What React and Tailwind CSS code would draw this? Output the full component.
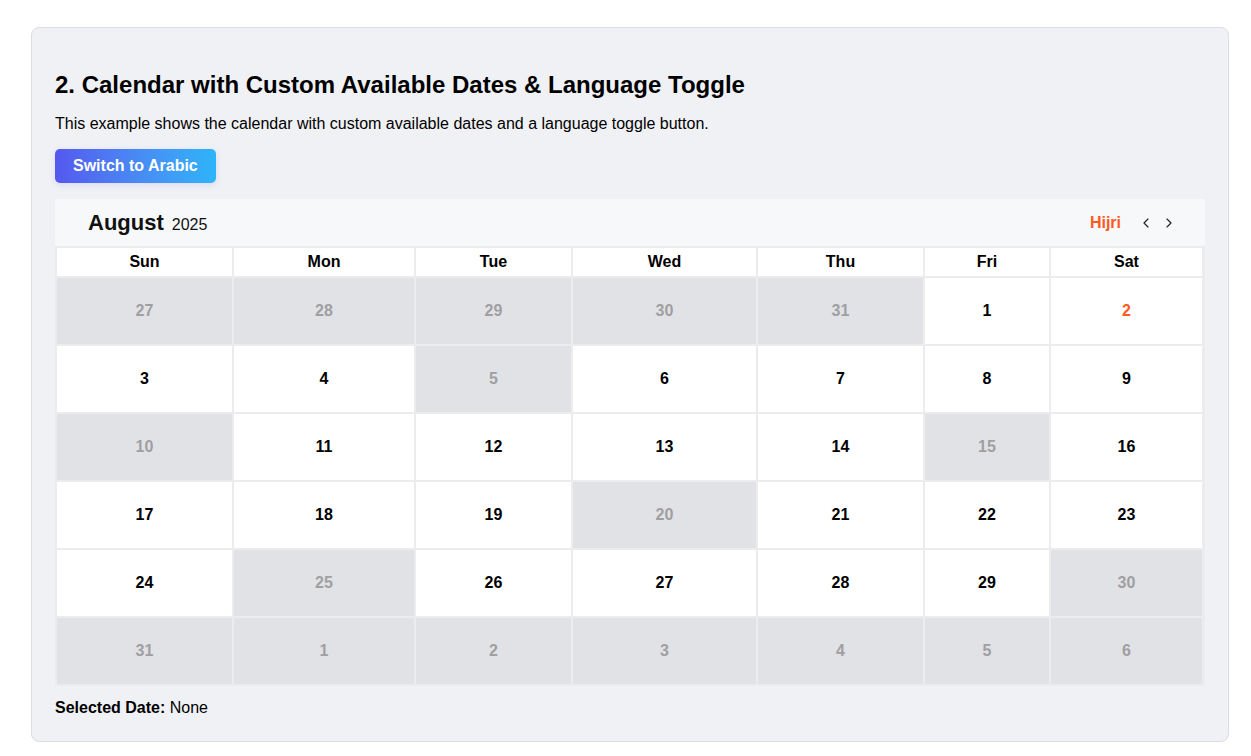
import { ChevronLeft, ChevronRight } from 'lucide-react';

const DAYS = ['Sun', 'Mon', 'Tue', 'Wed', 'Thu', 'Fri', 'Sat'];

// [day, disabled, highlight]
const WEEKS = [
    [[27, 1], [28, 1], [29, 1], [30, 1], [31, 1], [1], [2, 0, 1]],
    [[3], [4], [5, 1], [6], [7], [8], [9]],
    [[10, 1], [11], [12], [13], [14], [15, 1], [16]],
    [[17], [18], [19], [20, 1], [21], [22], [23]],
    [[24], [25, 1], [26], [27], [28], [29], [30, 1]],
    [[31, 1], [1, 1], [2, 1], [3, 1], [4, 1], [5, 1], [6, 1]],
];

function Cell({ day, disabled, today }) {
    const cls = disabled
        ? 'bg-[#e1e2e6] text-[#9f9fa2]'
        : today
            ? 'bg-white text-[#ff5a1f]'
            : 'bg-white text-black';
    return (
        <div className={`flex h-[66px] items-center justify-center text-[16px] font-bold ${cls}`}>
            {day}
        </div>
    );
}

export default function App() {
    return (
        <div className="min-h-screen bg-white px-[31px] pt-[27px] font-['Liberation_Sans',Arial,sans-serif] text-black">
            <div className="w-[1198px] rounded-lg border border-[#dcdde2] bg-[#f0f1f5] px-[23px] pb-[24px] pt-[42px]">
                <h2 className="text-[24px] font-bold leading-[30px]">
                    2. Calendar with Custom Available Dates &amp; Language Toggle
                </h2>
                <p className="mt-[12px] text-[16px] leading-[24px]">
                    This example shows the calendar with custom available dates and a language toggle button.
                </p>
                <button className="mt-[13px] h-[34px] rounded-[5px] bg-gradient-to-r from-[#5458ee] to-[#2db4f9] px-[18px] text-[16px] font-bold text-white shadow-[0_2px_6px_rgba(80,90,200,0.15)]">
                    Switch to Arabic
                </button>

                <div className="mt-[16px] w-[1150px]">
                    <div className="flex h-[47px] items-center justify-between bg-[#f7f8fa] pl-[33px] pr-[28px]">
                        <div className="flex items-baseline gap-[8px]">
                            <span className="text-[22px] font-bold text-[#111]">August</span>
                            <span className="text-[16px] text-[#111]">2025</span>
                        </div>
                        <div className="flex items-center">
                            <span className="mr-[17px] text-[16px] font-bold text-[#ff5a1f]">Hijri</span>
                            <ChevronLeft className="h-[16px] w-[16px] text-[#222]" strokeWidth={1.75} />
                            <ChevronRight className="ml-[7px] h-[16px] w-[16px] text-[#222]" strokeWidth={1.75} />
                        </div>
                    </div>
                    <div className="grid grid-cols-[175px_180px_155px_183px_165px_124px_151px] gap-[2px] bg-[#ececee] py-[2px] pl-[2px] pr-[3px]">
                        {DAYS.map((d) => (
                            <div key={d} className="flex h-[28px] items-center justify-center bg-white text-[16px] font-bold">
                                {d}
                            </div>
                        ))}
                        {WEEKS.flat().map(([day, dis, hi], i) => (
                            <Cell key={i} day={day} disabled={!!dis} today={!!hi} />
                        ))}
                    </div>
                </div>

                <p className="mt-[13px] text-[16px] leading-[18px]">
                    <span className="font-bold">Selected Date:</span> None
                </p>
            </div>
        </div>
    );
}
